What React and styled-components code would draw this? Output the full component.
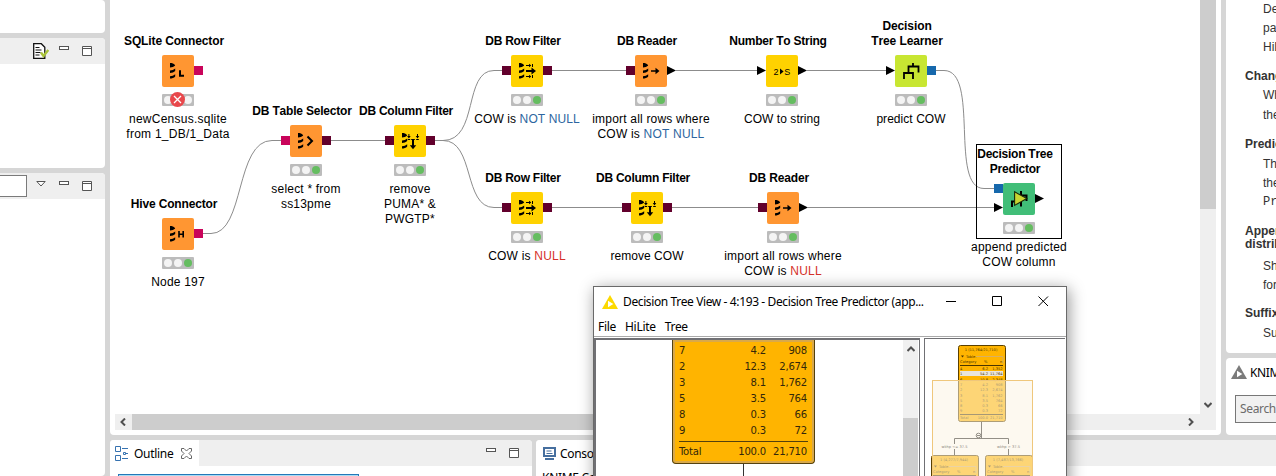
import React from 'react';
import styled, { createGlobalStyle } from 'styled-components';

const UI = "'Noto Sans', 'Open Sans', sans-serif";
const ARIAL = "'Liberation Sans', Arial, sans-serif";

const Global = createGlobalStyle`
  * { box-sizing: border-box; }
  html, body { margin: 0; height: 100%; overflow: hidden; }
  svg { display: block; flex: none; }
`;

const Workbench = styled.div`
  position: relative;
  display: flex;
  gap: 5px;
  width: 1276px;
  height: 476px;
  overflow: hidden;
  background: #d6d6d6;
  font: 12px ${ARIAL};
  font-kerning: none;
  color: #000;
`;
const Sidebar = styled.div`
  display: flex;
  flex-direction: column;
  gap: 5px;
  width: 105px;
  flex: none;
`;
const Main = styled.div`
  display: flex;
  flex-direction: column;
  gap: 5px;
  flex: 1;
  min-width: 0;
`;
const Row = styled.div`
  display: flex;
  gap: ${(p) => p.$gap || 5}px;
  height: ${(p) => p.$h}px;
  flex: none;
`;
const Panel = styled.section`
  background: #fff;
  overflow: hidden;
  flex: ${(p) => (p.$h || p.$w ? 'none' : 1)};
  ${(p) => p.$h && `height: ${p.$h}px;`}
  ${(p) => p.$w && `width: ${p.$w}px;`}
  min-width: 0;
  border-radius: ${(p) => p.$radius || '0 4px 4px 0'};
`;
const PanelHeader = styled.header`
  display: flex;
  align-items: center;
  justify-content: flex-end;
  height: 26px;
  padding-right: 13px;
  background: #efefef;
`;
const HeaderIcons = styled.div`
  display: flex;
  align-items: flex-start;
  gap: 13px;
  height: 16px;
  padding-top: 3px;
`;
const FilterInput = styled.div`
  width: 27px;
  height: 22px;
  margin: 0 auto 0 0;
  border: 1px solid #7a7a7a;
  border-left: 0;
  background: #fff;
`;
const Tab = styled.div`
  display: flex;
  align-items: center;
  gap: ${(p) => p.$gap}px;
  align-self: stretch;
  width: ${(p) => p.$w}px;
  padding-left: ${(p) => p.$pad}px;
  margin-right: auto;
  background: #fff;
  font: 12px ${UI};
  letter-spacing: -0.3px;
  white-space: nowrap;
`;
const DocumentIcon = styled.svg`
  margin: -3px -3px 0 0;
`;
const CloseIcon = styled.svg`
  margin-left: 2px;
`;

const EditorGrid = styled.div`
  display: grid;
  grid-template-columns: 5px 1085px 16px;
  grid-template-rows: 414px 16px;
`;
const Canvas = styled.div`
  grid-column: 1 / 3;
  position: relative;
  overflow: hidden;
`;
const VerticalBar = styled.div`
  display: flex;
  flex-direction: column;
  justify-content: space-between;
  align-items: center;
  background: #efefef;
  padding-bottom: 5px;
`;
const VerticalThumb = styled.div`
  width: 100%;
  height: 209px;
  background: #cdcdcd;
`;
const HorizontalBar = styled.div`
  grid-column: 2 / 4;
  display: flex;
  align-items: center;
  background: #efefef;
`;
const HorizontalThumb = styled.div`
  width: 925px;
  height: 16px;
  margin: 0 130px 0 6px;
  background: #cdcdcd;
`;

const Edges = styled.svg`
  position: absolute;
  left: 0;
  top: 0;
`;
const NodeBox = styled.div`
  position: absolute;
  left: ${(p) => p.$x - 110}px;
  top: ${(p) => p.$y}px;
  width: 32px;
`;
const NodeTitle = styled.div`
  position: absolute;
  bottom: 100%;
  left: -64px;
  width: 152px;
  padding-bottom: 6px;
  text-align: center;
  white-space: pre;
  font-weight: bold;
  line-height: 15px;
  letter-spacing: ${(p) => p.$track}px;
`;
const NodeFace = styled.div`
  width: 32px;
  height: 32px;
  border-radius: 2px;
  background: ${(p) => p.$color};
`;
const Lights = styled.div`
  position: relative;
  display: flex;
  align-items: center;
  gap: 2px;
  width: 32px;
  height: 12px;
  margin-top: 7px;
  padding-left: 2px;
  border-radius: 1px;
  background: #bcbcbc;
`;
const Light = styled.i`
  width: 8px;
  height: 8px;
  border-radius: 50%;
  background: ${(p) => (p.$on ? '#65bd60' : '#f4f4f4')};
`;
const ErrorBadge = styled.svg`
  position: absolute;
  left: 8px;
  top: -2px;
`;
const NodeNote = styled.div`
  width: 160px;
  margin: 6px 0 0 -64px;
  text-align: center;
  white-space: pre;
  line-height: 15px;
  letter-spacing: ${(p) => p.$track}px;
`;
const Mark = styled.span`
  color: ${(p) => p.$c};
`;
const Port = styled.i`
  position: absolute;
  width: 9px;
  height: 9px;
  left: ${(p) => (p.$out ? 32 : -9)}px;
  top: ${(p) => p.$y}px;
  background: ${(p) => p.$c};
  ${(p) => p.$flow && 'clip-path: polygon(0 0, 100% 50%, 0 100%);'}
`;
const Selection = styled.div`
  position: absolute;
  left: 866px;
  top: 144px;
  width: 86px;
  height: 95px;
  border: 1px solid #000;
`;

const Description = styled.div`
  display: flex;
  flex-direction: column;
  color: #333;
  white-space: nowrap;
  padding-left: 19px;
`;
const Heading = styled.div`
  height: ${(p) => p.$h}px;
  line-height: ${(p) => p.$lh || p.$h}px;
  white-space: pre;
  font-weight: bold;
`;
const Line = styled.div`
  height: 19.2px;
  line-height: 19.2px;
  padding-left: 18px;
  font-family: ${(p) => (p.$mono ? "'Liberation Mono', monospace" : 'inherit')};
`;
const HubHeader = styled.div`
  display: flex;
  align-items: center;
  gap: 3px;
  height: 28px;
  padding-left: 5px;
  font: 12px ${UI};
  letter-spacing: -0.4px;
  white-space: nowrap;
`;
const Search = styled.div`
  width: 80px;
  height: 28px;
  margin: 9px 0 0 9px;
  padding-left: 4px;
  border: 1px solid #777;
  background: #f1f1f1;
  color: #6b6b6b;
  font: 12px/26px ${UI};
  letter-spacing: -0.35px;
`;
const OutlineMap = styled.div`
  width: 241px;
  height: 20px;
  margin: 8px 0 0 8px;
  border: 1px solid #2478b8;
  background: #a6dcf5;
`;
const ConsoleText = styled.div`
  padding: 4px 0 0 6px;
  font: 12px/16px ${UI};
  letter-spacing: -0.3px;
`;

const Window = styled.div`
  position: absolute;
  left: 593px;
  top: 286px;
  width: 474px;
  height: 240px;
  border: 1px solid #6a6a6a;
  background: #fff;
  box-shadow: 2px 3px 15px rgba(0, 0, 0, 0.42);
  font: 12px ${UI};
`;
const TitleBar = styled.div`
  display: flex;
  align-items: center;
  height: 29px;
  padding: 0 17px 0 8px;
`;
const WindowTitle = styled.div`
  flex: 1;
  padding-left: 5px;
  letter-spacing: -0.38px;
  white-space: nowrap;
`;
const Controls = styled.div`
  display: flex;
  gap: 35px;
`;
const Menu = styled.div`
  display: flex;
  gap: 9px;
  height: 21px;
  padding-left: 4px;
  line-height: 22px;
  border-bottom: 1px solid #aaa;
  letter-spacing: -0.3px;
`;
const Panes = styled.div`
  display: flex;
  justify-content: space-between;
  height: 188px;
  padding: 1px 1px 0 0;
`;
const TreePane = styled.div`
  display: flex;
  justify-content: space-between;
  width: 326px;
  border: 2px solid #707074;
  border-width: 2px 1px 0 2px;
`;
const TreeArea = styled.div`
  width: 307px;
  padding-left: 76px;
  overflow: hidden;
`;
const TreeNode = styled.div`
  width: 143px;
  height: 124px;
  padding: 2px 4px 0;
  border: 1px solid #55410d;
  border-top: 0;
  border-radius: 0 0 4px 4px;
  box-shadow: inset 0 0 0 2px #d9a94a;
  background: #ffb400;
  font: 11.2px 'DejaVu Sans Condensed', 'DejaVu Sans', sans-serif;
  letter-spacing: -0.2px;
`;
const Stat = styled.div`
  display: grid;
  grid-template-columns: 44px 43px 1fr;
  height: 16px;
  line-height: 18px;
  padding: 0 3px 0 2px;
  color: #33270a;
  & > :not(:first-child) { text-align: right; }
  ${(p) => p.$total && 'border-top: 1px solid #55410d; margin: 3px 2px 0; padding: 0 1px 0 0; height: 20px; line-height: 20px;'}
`;
const Stem = styled.div`
  width: 1px;
  height: 60px;
  margin-left: 71px;
  background: #333;
`;
const PaneScroll = styled.div`
  display: flex;
  flex-direction: column;
  justify-content: space-between;
  align-items: center;
  width: 15px;
  margin-right: 1px;
  padding-top: 5px;
  background: #f0f0f0;
`;
const PaneThumb = styled.div`
  width: 15px;
  height: 107px;
  background: #cdcdcd;
`;
const MapPane = styled.div`
  width: 141px;
  border: 1px solid #707074;
  border-right: 0;
`;

const Minimize = () => (
  <svg width="10" height="5"><rect x=".5" y=".5" width="9" height="3" fill="#fff" stroke="#555" /></svg>
);
const Maximize = () => (
  <svg width="10" height="10"><path d="M.5 .5h9v9h-9zM.5 2.5h9" fill="#fff" stroke="#555" /></svg>
);
const Arrow = ({ d }) => (
  <svg width="8" height="8" viewBox="0 0 8 8"><path d={d} fill="none" stroke="#505050" strokeWidth="2" /></svg>
);
const Logo = ({ c }) => (
  <svg width="16" height="14" viewBox="0 0 16 14">
    <path d="M8 0L16 14H0z" fill={c} />
    <path d="M6 5.8L11.3 9 6 12.2z" fill="#fff" />
  </svg>
);

const Stack = () => (
  <path d="M8 8C10 8 12.3 8.6 13.2 10.6C12 12 10 12.4 8 12.4zM8 15.6C10 15.4 11.8 14.8 13.2 13.6V16C12 17.3 10 17.9 8 18zM8 21.3C10 21.1 11.8 20.4 13.2 19.2V21.4C12 22.8 10 23.5 8 23.6z" />
);
const glyphs = {
  letterL: <><Stack /><path d="M18 15.2V20.8H22" fill="none" stroke="#000" strokeWidth="2" /></>,
  letterH: <><Stack /><path d="M17 13V19.5M21.2 13V19.5M17 16.2H21.2" fill="none" stroke="#000" strokeWidth="1.6" /></>,
  selector: <><Stack /><path d="M17.5 11.5L22 16 17.5 20.5" fill="none" stroke="#000" strokeWidth="2" /></>,
  reader: <><Stack /><path d="M16 16H22" stroke="#000" strokeWidth="1.5" /><path d="M20.5 12.8L24.5 16 20.5 19.2z" /></>,
  row: (
    <><Stack /><path d="M15 16H21" stroke="#000" strokeWidth="2" /><path d="M20.5 12.5L25 16 20.5 19.5z" />
      <path d="M15 10.5H19M21.5 9V12M15 21.5H19M21.5 20V23" stroke="#000" /><path d="M18 8.8L20.3 10.5 18 12.2zM18 19.8L20.3 21.5 18 23.2z" /></>
  ),
  column: (
    <><Stack /><path d="M19 15V21" stroke="#000" strokeWidth="2" /><path d="M15.8 20.2L19 24.3 22.2 20.2z" />
      <path d="M14.9 9V12M23.5 9V12M13.8 14.5H16.2M22.2 14.5H24.8M17.2 14.5H20.8" stroke="#000" /><path d="M13.1 11H16.7L14.9 13.4zM21.7 11H25.3L23.5 13.4z" /></>
  ),
  number: (
    <><text x="7.6" y="20" fontSize="9" fontFamily={ARIAL}>2</text><path d="M14 13.4L17.6 16.4 14 19.4z" /><text x="18.3" y="20" fontSize="9" fontFamily={ARIAL}>S</text></>
  ),
  learner: <path d="M18 8V11.5M13.5 17V11.5H23.5V17.5M9 24V18H18V24" fill="none" stroke="#000" strokeWidth="1.8" />,
  predictor: (
    <><path d="M18 8V23.5M9 24V18.5H13M18 12.5H23.5V18" fill="none" stroke="#000" strokeWidth="2" />
      <path d="M11.6 8.8L23.8 15.5 11.6 22.4z" fill="#c8d632" stroke="#1c2a08" strokeWidth="1.1" /></>
  ),
};

const DB = '#62002c', CONN = '#c9045a', BLUE = '#1668ac';
const ORANGE = '#ff9632', YELLOW = '#ffd200';
const notNull = <Mark $c="#2d66a0">NOT NULL</Mark>;
const isNull = <Mark $c="#d6322a">NULL</Mark>;
const dbIn = { c: DB, y: 11 };
const dbOut = { c: DB, y: 11, out: 1 };
const flowIn = { c: '#000', y: 11, flow: 1 };
const flowOut = { c: '#000', y: 11, flow: 1, out: 1 };

const nodes = [
  { x: 162, y: 55, title: 'SQLite Connector', tt: -0.13, nt: 0.25, icon: 'letterL', color: ORANGE, ports: [{ c: CONN, y: 11, out: 1 }], note: 'newCensus.sqlite\nfrom 1_DB/1_Data', error: true },
  { x: 162, y: 218, title: 'Hive Connector', tt: -0.16, icon: 'letterH', color: ORANGE, ports: [{ c: CONN, y: 11, out: 1 }], note: 'Node 197' },
  { x: 290, y: 125, title: 'DB Table Selector', tt: -0.2, icon: 'selector', color: ORANGE, ports: [{ c: CONN, y: 11 }, dbOut], note: 'select * from\nss13pme' },
  { x: 394, y: 125, title: 'DB Column Filter', icon: 'column', color: YELLOW, ports: [dbIn, dbOut], note: 'remove\nPUMA* &\nPWGTP*' },
  { x: 511, y: 55, title: 'DB Row Filter', icon: 'row', color: YELLOW, ports: [dbIn, dbOut], nt: 0.1, note: <>COW is {notNull}</> },
  { x: 635, y: 55, title: 'DB Reader', tt: -0.15, icon: 'reader', color: ORANGE, ports: [dbIn, flowOut], note: <>{'import all rows where\nCOW is '}{notNull}</> },
  { x: 766, y: 55, title: 'Number To String', icon: 'number', color: YELLOW, ports: [flowIn, flowOut], nt: 0.05, note: 'COW to string' },
  { x: 895, y: 55, title: 'Decision\nTree Learner', tt: -0.1, icon: 'learner', color: '#c8e632', ports: [flowIn, { c: BLUE, y: 11, out: 1 }], nt: 0.05, note: 'predict COW' },
  { x: 511, y: 192, title: 'DB Row Filter', icon: 'row', color: YELLOW, ports: [dbIn, dbOut], note: <>COW is {isNull}</> },
  { x: 631, y: 192, title: 'DB Column Filter', icon: 'column', color: YELLOW, ports: [dbIn, dbOut], nt: 0.05, note: 'remove COW' },
  { x: 767, y: 192, title: 'DB Reader', tt: -0.15, icon: 'reader', color: ORANGE, ports: [dbIn, flowOut], note: <>{'import all rows where\nCOW is '}{isNull}</> },
  { x: 1003, y: 183, title: 'Decision Tree\nPredictor', icon: 'predictor', color: '#41be78', ports: [{ c: BLUE, y: 1 }, { ...flowIn, y: 20 }, flowOut], note: 'append predicted\nCOW column' },
];

const WorkflowNode = ({ n }) => (
  <NodeBox $x={n.x} $y={n.y}>
    <NodeTitle $track={n.tt ?? -0.25}>{n.title}</NodeTitle>
    <NodeFace $color={n.color}><svg width="32" height="32">{glyphs[n.icon]}</svg></NodeFace>
    {n.ports.map((p, i) => <Port key={i} $c={p.c} $y={p.y} $out={p.out} $flow={p.flow} />)}
    <Lights>
      <Light /><Light /><Light $on={!n.error} />
      {n.error && (
        <ErrorBadge width="15" height="15"><circle cx="7.5" cy="7.5" r="7.5" fill="#e8484c" /><path d="M4 4L11 11M11 4L4 11" stroke="#fff" strokeWidth="1.3" /></ErrorBadge>
      )}
    </Lights>
    <NodeNote $track={n.nt ?? 0.2}>{n.note}</NodeNote>
  </NodeBox>
);

const stats = [['7', '4.2', '908'], ['2', '12.3', '2,674'], ['3', '8.1', '1,762'], ['5', '3.5', '764'], ['8', '0.3', '66'], ['9', '0.3', '72']];
const miniRows = [['4', '6.2', '1,352'], ['1', '54.2', '11,764'], ['6', '10.8', '2,348'], ...stats];

const MiniHeader = ({ x, y, label }) => (
  <g fontSize="3.6" fill="#4a3500">
    <text x={x + 23} y={y + 6} textAnchor="middle">{label}</text>
    <path d={`M${x + 3} ${y + 10.5}h3l-1.5 2z`} />
    <text x={x + 8} y={y + 12.5}>Table:</text>
    <path d={`M${x + 18} ${y + 11.5}h27v7`} fill="none" stroke="#d9b060" />
    <text x={x + 2} y={y + 18}>Category</text>
    <text x={x + 26} y={y + 18}>%</text>
    <text x={x + 42} y={y + 18}>n</text>
    <path d={`M${x + 2} ${y + 20.5}h43`} stroke="#4a3500" />
  </g>
);
const MiniMap = () => (
  <svg width="140" height="138" viewBox="925 339 140 138" fontFamily="'DejaVu Sans', sans-serif">
    <rect x="958.5" y="345.5" width="47" height="76" rx="2" fill="#ffb400" stroke="#5a4000" />
    <rect x="960" y="371" width="43" height="5" fill="#e9e4da" />
    <MiniHeader x={958} y={345} label="1 (11,764/21,710)" />
    <g fontSize="3.6" fill="#4a3500">
      {miniRows.map((r, i) => (
        <g key={i}>
          <text x="960" y={370 + i * 5.3}>{r[0]}</text>
          <text x="988" y={370 + i * 5.3} textAnchor="end">{r[1]}</text>
          <text x="1002.5" y={370 + i * 5.3} textAnchor="end">{r[2]}</text>
        </g>
      ))}
      <path d="M960 414.5h43" stroke="#4a3500" />
      <text x="960" y="419">Total</text>
      <text x="988" y="419" textAnchor="end">100.0</text>
      <text x="1002.5" y="419" textAnchor="end">21,710</text>
    </g>
    <path d="M981.5 422V438.5M954.5 444V438.5H1008.5V444M954.5 449V456M1008.5 449V456" fill="none" stroke="#222" />
    <circle cx="978.5" cy="435.5" r="2.3" fill="#fff" stroke="#222" /><path d="M977 435.5h3" stroke="#222" />
    <text x="954.5" y="448" fontSize="3.6" textAnchor="middle">wkhp &lt;= 37.5</text>
    <text x="1008.5" y="448" fontSize="3.6" textAnchor="middle">wkhp &gt; 37.5</text>
    <rect x="931.5" y="455.5" width="47" height="40" rx="2" fill="#ffb400" stroke="#5a4000" />
    <rect x="985.5" y="455.5" width="47" height="40" rx="2" fill="#ffb400" stroke="#5a4000" />
    <MiniHeader x={931} y={455} label="1 (4,277/7,944)" />
    <MiniHeader x={985} y={455} label="1 (7,487/13,766)" />
    <rect x="932.5" y="380.5" width="100" height="110" fill="#fcf4e3" fillOpacity=".52" stroke="#efc77c" />
  </svg>
);

export default function App() {
  return (
    <Workbench>
      <Global />
      <Sidebar>
        <Panel $h={33} />
        <Panel $h={130}>
          <PanelHeader>
            <HeaderIcons>
              <DocumentIcon width="16" height="16">
                <path d="M.7 .7H8.3L11.8 4.2V15.3H.7z" fill="#fff" stroke="#111" strokeWidth="1.3" />
                <path d="M2.5 4.5h4M2.5 7h6M2.5 9.5h5M2.5 12h4" stroke="#111" />
                <path d="M8 9.5L10.5 13 15.3 7" fill="none" stroke="#a9c23a" strokeWidth="2.4" />
              </DocumentIcon>
              <Minimize /><Maximize />
            </HeaderIcons>
          </PanelHeader>
        </Panel>
        <Panel>
          <PanelHeader>
            <FilterInput />
            <HeaderIcons>
              <svg width="10" height="6"><path d="M.8 .5H9.2L5 5z" fill="#fff" stroke="#555" /></svg>
              <Minimize /><Maximize />
            </HeaderIcons>
          </PanelHeader>
        </Panel>
      </Sidebar>

      <Main>
        <Row $h={435}>
          <Panel $w={1111} $radius="0 0 4px 4px">
            <EditorGrid>
              <Canvas>
                <Edges width="1090" height="414" viewBox="110 0 1090 414" fill="none" stroke="#8c8c8c">
                  <path d="M203 233.5H211C245 233.5 235 140.5 272 140.5H281M331 140.5H385M435 140.5H443C479 140.5 463 70.5 494 70.5H502M435 140.5H443C475 140.5 463 207.5 494 207.5H502" />
                  <path d="M552 70.5H626M676 70.5H757M807 70.5H886M936 70.5H944C980 70.5 949 188.5 984 188.5H994M552 207.5H622M672 207.5H758M808 207.5H994" />
                </Edges>
                {nodes.map((n) => <WorkflowNode key={`${n.x}-${n.y}`} n={n} />)}
                <Selection />
              </Canvas>
              <VerticalBar><VerticalThumb /><Arrow d="M.5 2L4 5.5 7.5 2" /></VerticalBar>
              <div />
              <HorizontalBar>
                <svg width="11" height="8" viewBox="-4 0 11 8"><path d="M6 .5L2.5 4 6 7.5" fill="none" stroke="#505050" strokeWidth="2" /></svg>
                <HorizontalThumb />
                <Arrow d="M2 .5L5.5 4 2 7.5" />
              </HorizontalBar>
            </EditorGrid>
          </Panel>
          <Main>
            <Panel $h={353} $radius="0 0 0 4px">
              <Description>
                <Line>Decision</Line><Line>paths</Line><Line>HiLite</Line>
                <Heading $h={28.8} $lh={37}>Change</Heading>
                <Line>When</Line><Line>the</Line>
                <Heading $h={30} $lh={38}>Prediction</Heading>
                <Line>The</Line><Line>the</Line><Line $mono>Prediction</Line>
                <Heading $h={44.5} $lh={13}>{'\nAppend\ndistribution'}</Heading>
                <Line>Show</Line><Line>for</Line>
                <Heading $h={28.5} $lh={37}>Suffix</Heading>
                <Line>Suffix</Line>
              </Description>
            </Panel>
            <Panel $radius="4px 0 0 4px">
              <HubHeader><Logo c="#7b7b7b" />KNIME</HubHeader>
              <Search>Search</Search>
            </Panel>
          </Main>
        </Row>
        <Row $h={36} $gap={4}>
          <Panel $w={422} $radius="4px 4px 0 0">
            <PanelHeader>
              <Tab $w={89} $pad={5} $gap={6}>
                <svg width="13" height="15" fill="none" stroke="#3672b0">
                  <path d="M.5 .5h5v5h-5zM.5 9.5h5v5h-5zM8.5 6.5h2v2h-2zM7 2.5h6M11 7.5h2M7 12.5h6" />
                </svg>
                Outline
                <CloseIcon width="11" height="11" fill="none" stroke="#666">
                  <path d="M.5 .5H3L5.5 3 8 .5H10.5V3L8 5.5 10.5 8V10.5H8L5.5 8 3 10.5H.5V8L3 5.5 .5 3z" />
                </CloseIcon>
              </Tab>
              <HeaderIcons><Minimize /><Maximize /></HeaderIcons>
            </PanelHeader>
            <OutlineMap />
          </Panel>
          <Panel $radius="4px 0 0 0">
            <PanelHeader>
              <Tab $w={110} $pad={7} $gap={4}>
                <svg width="13" height="13"><rect x="1" y="1" width="11" height="8" fill="#fff" stroke="#466f9f" strokeWidth="2" /><path d="M3.5 4h5M3.5 6.5h6" stroke="#466f9f" /><path d="M2 12h9" stroke="#466f9f" strokeWidth="2" /></svg>
                Console
              </Tab>
            </PanelHeader>
            <ConsoleText>KNIME Console</ConsoleText>
          </Panel>
        </Row>
      </Main>

      <Window>
        <TitleBar>
          <Logo c="#fcd900" />
          <WindowTitle>Decision Tree View - 4:193 - Decision Tree Predictor (app...</WindowTitle>
          <Controls>
            <svg width="11" height="11"><path d="M0 5.5h10" stroke="#000" /></svg>
            <svg width="11" height="11"><path d="M.5 .5h9v9h-9z" fill="none" stroke="#000" /></svg>
            <svg width="11" height="11"><path d="M.5 .5l9.5 9.5M10 .5L.5 10" stroke="#000" /></svg>
          </Controls>
        </TitleBar>
        <Menu><span>File</span><span>HiLite</span><span>Tree</span></Menu>
        <Panes>
          <TreePane>
            <TreeArea>
              <TreeNode>
                {stats.map((r) => <Stat key={r[0]}><span>{r[0]}</span><span>{r[1]}</span><span>{r[2]}</span></Stat>)}
                <Stat $total><span>Total</span><span>100.0</span><span>21,710</span></Stat>
              </TreeNode>
              <Stem />
            </TreeArea>
            <PaneScroll><Arrow d="M.5 6L4 2.5 7.5 6" /><PaneThumb /></PaneScroll>
          </TreePane>
          <MapPane><MiniMap /></MapPane>
        </Panes>
      </Window>
    </Workbench>
  );
}
